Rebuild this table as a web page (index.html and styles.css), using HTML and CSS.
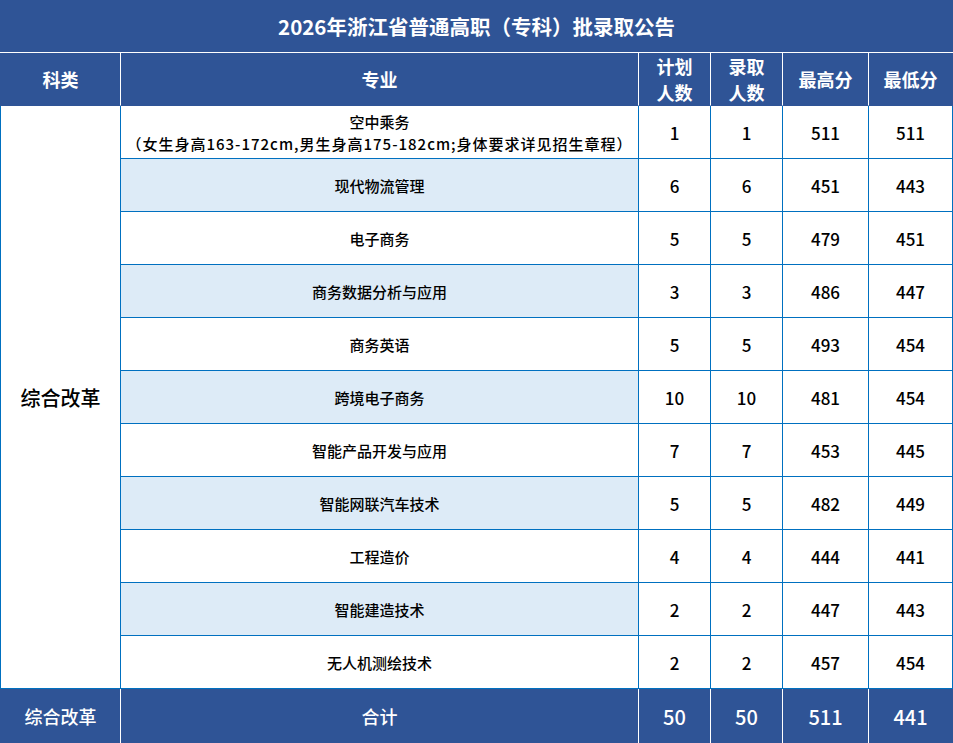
FILE: index.html
```html
<!DOCTYPE html>
<html lang="zh-CN">
<head>
<meta charset="utf-8">
<title>2026年浙江省普通高职（专科）批录取公告</title>
<link rel="stylesheet" href="styles.css">
</head>
<body>
<table class="sheet">
  <colgroup>
    <col class="c-type">
    <col class="c-major">
    <col class="c-plan">
    <col class="c-admit">
    <col class="c-max">
    <col class="c-min">
  </colgroup>
  <thead>
    <tr class="title-row">
      <th colspan="6" class="title">2026年浙江省普通高职（专科）批录取公告</th>
    </tr>
    <tr class="head-row">
      <th class="first">科类</th>
      <th>专业</th>
      <th>计划<br>人数</th>
      <th>录取<br>人数</th>
      <th>最高分</th>
      <th class="last">最低分</th>
    </tr>
  </thead>
  <tbody>
    <tr>
      <td class="first cat" rowspan="11">综合改革</td>
      <td class="major two">空中乘务<br><span class="note">（女生身高163-172cm,男生身高175-182cm;身体要求详见招生章程）</span></td>
      <td class="num">1</td><td class="num">1</td><td class="num">511</td><td class="num last">511</td>
    </tr>
    <tr>
      <td class="major alt">现代物流管理</td>
      <td class="num">6</td><td class="num">6</td><td class="num">451</td><td class="num last">443</td>
    </tr>
    <tr>
      <td class="major">电子商务</td>
      <td class="num">5</td><td class="num">5</td><td class="num">479</td><td class="num last">451</td>
    </tr>
    <tr>
      <td class="major alt">商务数据分析与应用</td>
      <td class="num">3</td><td class="num">3</td><td class="num">486</td><td class="num last">447</td>
    </tr>
    <tr>
      <td class="major">商务英语</td>
      <td class="num">5</td><td class="num">5</td><td class="num">493</td><td class="num last">454</td>
    </tr>
    <tr>
      <td class="major alt">跨境电子商务</td>
      <td class="num">10</td><td class="num">10</td><td class="num">481</td><td class="num last">454</td>
    </tr>
    <tr>
      <td class="major">智能产品开发与应用</td>
      <td class="num">7</td><td class="num">7</td><td class="num">453</td><td class="num last">445</td>
    </tr>
    <tr>
      <td class="major alt">智能网联汽车技术</td>
      <td class="num">5</td><td class="num">5</td><td class="num">482</td><td class="num last">449</td>
    </tr>
    <tr>
      <td class="major">工程造价</td>
      <td class="num">4</td><td class="num">4</td><td class="num">444</td><td class="num last">441</td>
    </tr>
    <tr>
      <td class="major alt">智能建造技术</td>
      <td class="num">2</td><td class="num">2</td><td class="num">447</td><td class="num last">443</td>
    </tr>
    <tr>
      <td class="major">无人机测绘技术</td>
      <td class="num">2</td><td class="num">2</td><td class="num">457</td><td class="num last">454</td>
    </tr>
  </tbody>
  <tfoot>
    <tr class="foot-row">
      <td class="first">综合改革</td>
      <td>合计</td>
      <td class="fnum">50</td>
      <td class="fnum">50</td>
      <td class="fnum">511</td>
      <td class="fnum last">441</td>
    </tr>
  </tfoot>
</table>
</body>
</html>
```

FILE: styles.css
```css
* { box-sizing: border-box; }

html, body {
  margin: 0;
  padding: 0;
  background: #ffffff;
}

body {
  font-family: "Noto Sans CJK SC", "Noto Sans", sans-serif;
  color: #000;
}

.sheet {
  width: 953px;
  border-collapse: separate;
  border-spacing: 0;
  table-layout: fixed;
}

.c-type { width: 121px; }
.c-major { width: 518px; }
.c-plan { width: 72px; }
.c-admit { width: 72px; }
.c-max { width: 86px; }
.c-min { width: 84px; }

th, td {
  padding: 0;
  text-align: center;
  vertical-align: middle;
}

.title-row { height: 53px; }
.title {
  background: #2f5496;
  color: #fff;
  font-size: 20.5px;
  font-weight: 700;
  border-bottom: 1px solid #ffffff;
}

.head-row { height: 53px; }
.head-row th {
  background: #2f5496;
  color: #fff;
  font-size: 18px;
  font-weight: 700;
  line-height: 26px;
  border-right: 1px solid #ffffff;
  border-bottom: 1px solid #2f5496;
}
.head-row th.first { border-left: 1px solid #2f5496; }
.head-row th.last { border-right: 1px solid #2f5496; }

tbody tr { height: 53px; }
tbody td {
  border-right: 1px solid #0070c0;
  border-bottom: 1px solid #0070c0;
  background: #fff;
}
tbody td.first { border-left: 1px solid #0070c0; }

.cat {
  font-size: 20px;
  font-weight: 500;
}

.major {
  font-size: 15px;
  font-weight: 500;
}
.major.two {
  line-height: 22px;
  padding-top: 1px;
}
.major .note { letter-spacing: 1px; }
.major.alt { background: #ddebf7; }

.num {
  font-size: 17px;
  font-weight: 500;
}

.foot-row { height: 54px; }
.foot-row td {
  background: #2f5496;
  color: #fff;
  font-size: 18px;
  font-weight: 500;
  border-right: 1px solid #ffffff;
}
.foot-row td.first { border-left: 1px solid #2f5496; }
.foot-row td.last { border-right: 1px solid #2f5496; }
.foot-row .fnum { font-size: 20px; }
```
